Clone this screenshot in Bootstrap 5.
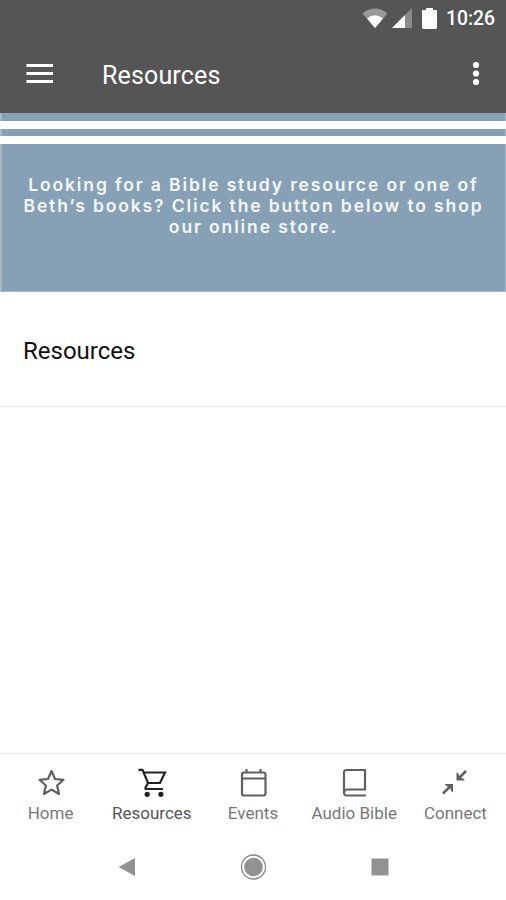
<!DOCTYPE html>
<html lang="en">

<head>
    <meta charset="UTF-8">
    <meta name="viewport" content="width=device-width, initial-scale=1.0">
    <title>Resources</title>
    <link href="https://cdn.jsdelivr.net/npm/bootstrap@5.3.0/dist/css/bootstrap.min.css" rel="stylesheet">
    <style>
        :root {
            --bar-color: #555555;
            --banner-color: #86a1b5;
            --tab-color: #777777;
        }

        body {
            height: 900px;
            overflow: hidden;
            font-family: Roboto, "Liberation Sans", sans-serif;
        }

        svg {
            display: block;
            flex-shrink: 0;
        }

        .top-area {
            height: 113px;
            background-color: var(--bar-color);
        }

        .status-bar {
            height: 37px;
            padding-right: 10px;
        }

        .clock {
            width: 50px;
            margin-left: 9px;
            font-size: 19.3px;
            font-weight: 500;
            line-height: 37px;
        }

        .app-bar {
            height: 74px;
            padding: 0 20px 0 26px;
        }

        .app-title {
            margin-left: 48px;
            padding-top: 3px;
            font-size: 25px;
            line-height: 32px;
            letter-spacing: 0.15px;
        }

        .banner {
            height: 179px;
            border-left: 2px solid #a4b9c9;
            border-right: 1px solid #a4b9c9;
            border-bottom: 1px solid #a9b9c8;
            background-color: var(--banner-color);
        }

        .stripe {
            height: 8px;
            margin: 0 -1px 0 -2px;
            background-color: #ffffff;
        }

        .stripe-first {
            margin-top: 8px;
            margin-bottom: 7px;
        }

        .banner-text {
            margin-top: 30px;
            color: #f3f8fd;
            font-family: Inter, "Liberation Sans", sans-serif;
            font-size: 17.5px;
            font-weight: 600;
            line-height: 21px;
            letter-spacing: 1.87px;
        }

        .resource-item {
            height: 115px;
            padding: 3px 23px 0 23px;
            border-bottom: 1px solid #eaeaea !important;
            color: #111111;
            font-size: 24px;
        }

        .tab-bar {
            height: 81px;
            padding-top: 13px;
            border-top: 1px solid #ececec;
        }

        .tab-bar .nav-link {
            padding: 0;
            color: var(--tab-color);
            font-size: 17px;
            line-height: 20px;
        }

        .tab-bar .nav-link.active {
            color: #555555;
        }

        .tab-bar svg {
            margin-bottom: 4px;
            color: #606060;
        }

        .tab-bar .active svg {
            color: #222222;
        }

        .system-bar {
            height: 66px;
            padding: 0 116px 0 118px;
        }
    </style>
</head>

<body class="d-flex flex-column bg-white">
    <header class="top-area text-white">
        <div class="status-bar d-flex align-items-center justify-content-end">
            <svg width="26" height="21" viewBox="0 0 26 21">
                <path d="M0.500 5.500Q13-4.500 25.500 5.500L13 20Z" fill="#999999" />
                <path d="M5 10.500Q13 4 21 10.500L13 20Z" fill="#ffffff" />
            </svg>
            <svg class="ms-1" width="20" height="21" viewBox="0 0 20 21">
                <path d="M0 20L20 0V20Z" fill="#8b8b8b" />
                <path d="M0 20L13 7V20Z" fill="#ffffff" />
            </svg>
            <svg width="25" height="21" viewBox="0 0 25 21">
                <path d="M10 2H14V0H21V2H25V19.500Q25 21 23.500 21H11.500Q10 21 10 19.500Z" fill="#ffffff" />
            </svg>
            <span class="clock text-nowrap">10:26</span>
        </div>
        <div class="app-bar d-flex align-items-center">
            <svg width="28" height="20" viewBox="0 0 28 20" fill="#ffffff">
                <path d="M0.500 0H27V3H0.500ZM0.500 8H27V11H0.500ZM0.500 16H27V19H0.500Z" />
            </svg>
            <h1 class="app-title fw-normal mb-0">Resources</h1>
            <svg class="ms-auto" width="20" height="26" viewBox="0 0 20 26" fill="#ffffff">
                <circle cx="10" cy="4" r="3.100" />
                <circle cx="10" cy="12.500" r="3.100" />
                <circle cx="10" cy="21" r="3.100" />
            </svg>
        </div>
    </header>

    <main class="flex-grow-1">
        <section class="banner d-flex flex-column">
            <div class="stripe stripe-first"></div>
            <div class="stripe"></div>
            <p class="banner-text text-center text-nowrap mb-0">Looking for a Bible study resource or one of<br>Beth’s books? Click the button below to shop<br>our online store.</p>
        </section>
        <div class="list-group list-group-flush">
            <a href="#" class="resource-item list-group-item d-flex align-items-center">Resources</a>
        </div>
    </main>

    <nav class="tab-bar nav flex-nowrap">
        <a href="#" class="nav-link col d-flex flex-column align-items-center text-nowrap">
            <svg width="30" height="32" viewBox="0 0 30 32" fill="none" stroke="currentColor" stroke-width="2.200" stroke-linejoin="round">
                <path d="M15.500 4L19 12L27.500 12.800L21.100 18.500L23 27L15.500 22.600L8 27L9.900 18.500L3.500 12.800L12 12Z" />
            </svg>
            Home
        </a>
        <a href="#" class="nav-link active col d-flex flex-column align-items-center text-nowrap">
            <svg width="30" height="32" viewBox="0 0 30 32" fill="none" stroke="currentColor" stroke-width="2.200">
                <path d="M1.500 2.800H5.500L11 16H23L28 5.500H6.600M11 16L8.500 20.500Q8 22 9.500 22H26" />
                <circle cx="10.200" cy="27.300" r="2.600" fill="currentColor" stroke="none" />
                <circle cx="23.900" cy="27.300" r="2.600" fill="currentColor" stroke="none" />
            </svg>
            Resources
        </a>
        <a href="#" class="nav-link col d-flex flex-column align-items-center text-nowrap">
            <svg width="30" height="32" viewBox="0 0 30 32" fill="none" stroke="currentColor" stroke-width="2.200">
                <rect x="4" y="5.500" width="23.500" height="23" rx="2" />
                <path d="M4 11.500H27M8.500 2V6M22.500 2V6" />
            </svg>
            Events
        </a>
        <a href="#" class="nav-link col d-flex flex-column align-items-center text-nowrap">
            <svg width="30" height="32" viewBox="0 0 30 32" fill="none" stroke="currentColor" stroke-width="2.200">
                <path d="M27 28.500H7.500Q5 28.500 5 25.500V5.500Q5 3 7.500 3H26V22.500H8Q5.200 22.500 5 25.500" />
            </svg>
            Audio Bible
        </a>
        <a href="#" class="nav-link col d-flex flex-column align-items-center text-nowrap">
            <svg width="30" height="32" viewBox="0 0 30 32" fill="none" stroke="currentColor" stroke-width="2.500">
                <path d="M26 4L18 12M3 26.500L11 18.500" />
                <path d="M16.500 5V13.500H25L22.500 11H19V7.500ZM4.500 17H13V25.500L10.500 23V19.500H7Z" fill="currentColor" stroke="none" />
            </svg>
            Connect
        </a>
    </nav>

    <footer class="system-bar d-flex align-items-center justify-content-between">
        <svg width="18" height="20" viewBox="0 0 18 20">
            <path d="M0.500 10L17 1V19Z" fill="#929292" />
        </svg>
        <svg width="28" height="28" viewBox="0 0 28 28">
            <circle cx="14.500" cy="14" r="12" fill="none" stroke="#8c8c8c" stroke-width="1.300" />
            <circle cx="14.500" cy="14" r="9.300" fill="#929292" />
        </svg>
        <svg width="20" height="20" viewBox="0 0 20 20">
            <rect x="1.500" y="1.500" width="17" height="17" fill="#929292" />
        </svg>
    </footer>

    <script src="https://cdn.jsdelivr.net/npm/bootstrap@5.3.0/dist/js/bootstrap.bundle.min.js"></script>
</body>

</html>
